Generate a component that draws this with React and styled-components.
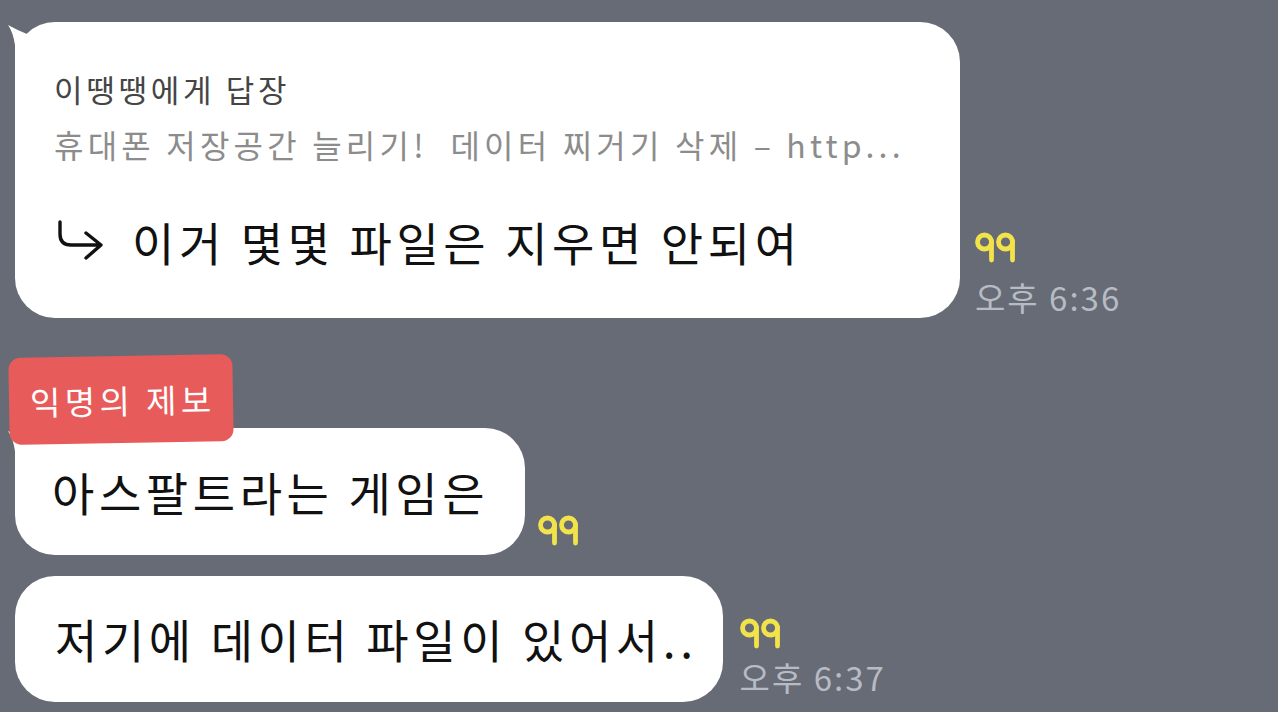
import React from 'react';
import styled, { createGlobalStyle } from 'styled-components';

const GlobalStyle = createGlobalStyle`
  html, body {
    margin: 0;
    padding: 0;
    background: #666b76;
  }
  body {
    font-family: "Noto Sans CJK KR", "Noto Sans", sans-serif;
    overflow: hidden;
  }
`;

const Chat = styled.div`
  width: 1278px;
  height: 712px;
  box-sizing: border-box;
  padding: 22px 0 0 15px;
  display: flex;
  flex-direction: column;
  align-items: flex-start;
  overflow: hidden;
`;

const Row = styled.div`
  display: flex;
  align-items: flex-end;
  margin-top: ${p => p.$top || 0}px;
`;

const Bubble = styled.div`
  position: relative;
  box-sizing: border-box;
  background: #fff;
  border-radius: 40px;
  padding: ${p => p.$pad};
  width: ${p => (p.$width ? `${p.$width}px` : 'auto')};
  color: #111;
`;

const Tail = styled.svg`
  position: absolute;
  left: -8px;
  top: 0;
`;

const ReplyTo = styled.div`
  font-size: 31px;
  line-height: 44px;
  letter-spacing: 3.7px;
  color: #454545;
`;

const Quoted = styled.div`
  margin-top: 11px;
  font-size: 32px;
  line-height: 44px;
  letter-spacing: 4.2px;
  color: #8c8c8c;
  white-space: pre;
`;

const Message = styled.div`
  display: flex;
  align-items: center;
  margin-top: ${p => p.$top || 0}px;
  font-size: 46px;
  line-height: 60px;
  letter-spacing: 4.6px;
  white-space: pre;
`;

const ArrowIcon = styled.svg`
  margin-right: 28px;
  flex: none;
`;

const Meta = styled.div`
  display: flex;
  flex-direction: column;
  align-items: flex-start;
  margin-left: ${p => p.$gap}px;
  padding-bottom: ${p => p.$bottom}px;
`;

const Quote = styled.svg`
  display: block;
`;

const Time = styled.div`
  margin-top: ${p => p.$top}px;
  font-size: 33px;
  line-height: 40px;
  letter-spacing: 2px;
  color: #b7bbc3;
  white-space: nowrap;
`;

const Tag = styled.div`
  position: relative;
  z-index: 2;
  margin: 38px 0 -15px -6px;
  height: 87px;
  padding: 0 17px 0 21px;
  display: flex;
  align-items: center;
  background: #e85b5b;
  color: #fff;
  border-radius: 12px;
  font-size: 33px;
  letter-spacing: 4.4px;
  transform: rotate(-1deg);
`;

const BubbleTail = () => (
  <Tail width="24" height="46" viewBox="0 0 24 46">
    <path d="M1,3 Q10,8 20,12 L20,46 L8,46 L8,23 Q6,10 1,3 Z" fill="#fff" />
  </Tail>
);

const QuoteMark = () => (
  <Quote width="42" height="32" viewBox="0 0 42 32">
    {[0, 21].map(x => (
      <g key={x} transform={`translate(${x},0)`} fill="none" stroke="#f3e34b" strokeWidth="4.8" strokeLinecap="round">
        <circle cx="9.5" cy="10" r="7" />
        <path d="M16.5,9 L16.5,28" />
      </g>
    ))}
  </Quote>
);

const ReplyArrow = () => (
  <ArrowIcon width="50" height="44" viewBox="0 0 50 44">
    <path
      d="M6,3 L6,15 Q6,26 17,26 L47,26 M32,14 L47,26 L32,39"
      fill="none"
      stroke="#111"
      strokeWidth="3.4"
      strokeLinecap="round"
      strokeLinejoin="round"
    />
  </ArrowIcon>
);

export default function App() {
  return (
    <>
      <GlobalStyle />
      <Chat>
        <Row>
          <Bubble $width={945} $pad="45px 40px 47px 39px">
            <BubbleTail />
            <ReplyTo>이땡땡에게 답장</ReplyTo>
            <Quoted>휴대폰 저장공간 늘리기!  데이터 찌거기 삭제 – http...</Quoted>
            <Message $top={45}>
              <ReplyArrow />
              이거 몇몇 파일은 지우면 안되여
            </Message>
          </Bubble>
          <Meta $gap={15} $bottom={1}>
            <QuoteMark />
            <Time $top={13}>오후 6:36</Time>
          </Meta>
        </Row>

        <Tag>익명의 제보</Tag>

        <Row>
          <Bubble $pad="33px 36px 34px 37px">
            <BubbleTail />
            <Message>아스팔트라는 게임은</Message>
          </Bubble>
          <Meta $gap={13} $bottom={8}>
            <QuoteMark />
          </Meta>
        </Row>

        <Row $top={21}>
          <Bubble $pad="32px 25px 34px 40px">
            <Message>저기에 데이터 파일이 있어서..</Message>
          </Bubble>
          <Meta $gap={17} $bottom={5}>
            <QuoteMark />
            <Time $top={7}>오후 6:37</Time>
          </Meta>
        </Row>
      </Chat>
    </>
  );
}
